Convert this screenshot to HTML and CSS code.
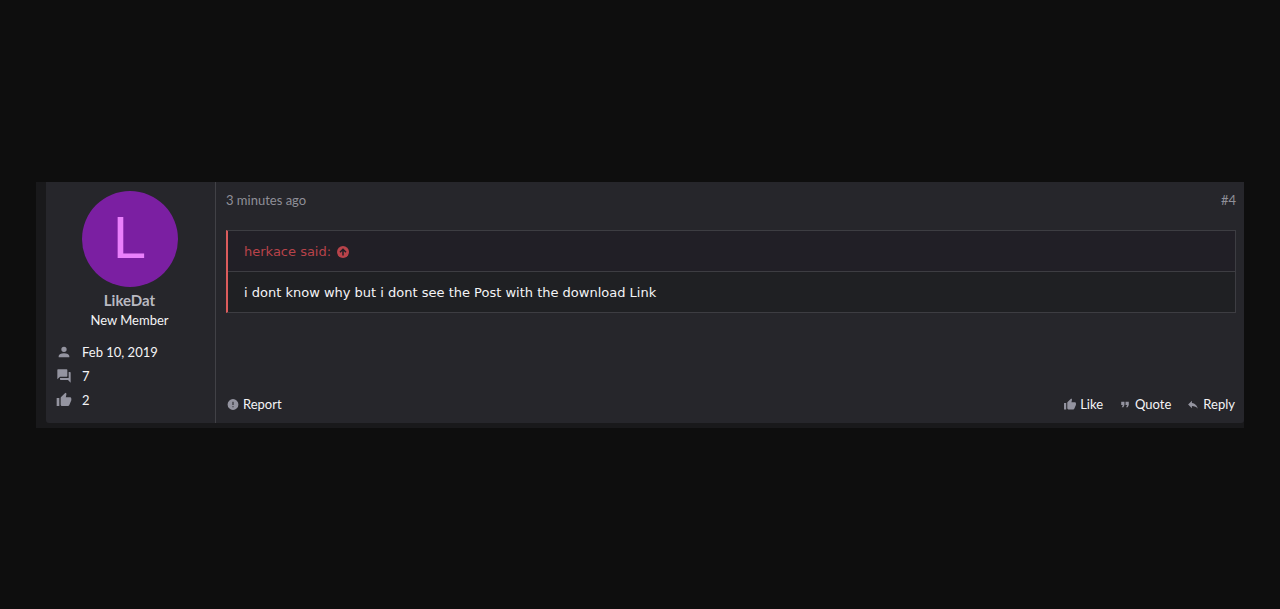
FILE: index.html
```html
<!DOCTYPE html>
<html lang="en">
  <head>
    <meta charset="UTF-8" />
    <meta name="viewport" content="width=device-width, initial-scale=1.0" />
    <title>Thread reply</title>
    <link rel="stylesheet" href="styles.css">
  </head>
  <body>
    <!-- icons shared by the member stats and the action bar -->
    <svg class="sprite" aria-hidden="true">
      <symbol id="icon-account" viewBox="0 0 24 24">
        <path d="M12 4a4 4 0 0 1 4 4 4 4 0 0 1-4 4 4 4 0 0 1-4-4 4 4 0 0 1 4-4m0 10c4.42 0 8 1.79 8 4v2H4v-2c0-2.21 3.58-4 8-4z" />
      </symbol>
      <symbol id="icon-forum" viewBox="0 0 24 24">
        <path d="M17 12V3a1 1 0 0 0-1-1H3a1 1 0 0 0-1 1v14l4-4h10a1 1 0 0 0 1-1m4-6h-2v9H6v2a1 1 0 0 0 1 1h11l4 4V7a1 1 0 0 0-1-1z" />
      </symbol>
      <symbol id="icon-thumb" viewBox="0 0 24 24">
        <path d="M23 10a2 2 0 0 0-2-2h-6.32l.96-4.57c.02-.1.03-.21.03-.32 0-.41-.17-.79-.44-1.06L14.17 1 7.59 7.58C7.22 7.95 7 8.45 7 9v10a2 2 0 0 0 2 2h9c.83 0 1.54-.5 1.84-1.22l3.02-7.05c.09-.23.14-.47.14-.73v-2M1 21h4V9H1v12z" />
      </symbol>
      <symbol id="icon-alert" viewBox="0 0 24 24">
        <path d="M13 13h-2V7h2m0 10h-2v-2h2M12 2A10 10 0 0 0 2 12a10 10 0 0 0 10 10 10 10 0 0 0 10-10A10 10 0 0 0 12 2z" />
      </symbol>
      <symbol id="icon-quote" viewBox="0 0 24 24">
        <path d="M14 17h3l2-4V7h-6v6h3M6 17h3l2-4V7H5v6h3l-2 4z" />
      </symbol>
      <symbol id="icon-reply" viewBox="0 0 24 24">
        <path d="M10 9V5l-7 7 7 7v-4.1c5 0 8.5 1.6 11 5.1-1-5-4-10-11-11z" />
      </symbol>
      <symbol id="icon-up" viewBox="0 0 24 24">
        <circle cx="12" cy="12" r="12" />
        <path class="icon-up-arrow" d="M12 19V7M6 12.500 12 6.500 18 12.500" />
      </symbol>
    </svg>

    <main class="thread">
      <article class="message">
        <aside class="message-user">
          <a class="avatar" href="#">L</a>
          <a class="username" href="#">LikeDat</a>
          <div class="user-title">New Member</div>
          <dl class="user-stats">
            <div class="stat">
              <dt><svg class="stat-icon" role="img" aria-label="Joined"><use href="#icon-account" /></svg></dt>
              <dd>Feb 10, 2019</dd>
            </div>
            <div class="stat">
              <dt><svg class="stat-icon" role="img" aria-label="Messages"><use href="#icon-forum" /></svg></dt>
              <dd>7</dd>
            </div>
            <div class="stat">
              <dt><svg class="stat-icon" role="img" aria-label="Likes"><use href="#icon-thumb" /></svg></dt>
              <dd>2</dd>
            </div>
          </dl>
        </aside>

        <div class="message-main">
          <header class="message-header">
            <a href="#">3 minutes ago</a>
            <a href="#">#4</a>
          </header>

          <blockquote class="quote">
            <a class="quote-title" href="#">herkace said: <svg class="quote-icon" aria-hidden="true"><use href="#icon-up" /></svg></a>
            <div class="quote-content">i dont know why but i dont see the Post with the download Link</div>
          </blockquote>

          <footer class="message-footer">
            <a class="action" href="#"><svg class="action-icon" aria-hidden="true"><use href="#icon-alert" /></svg>Report</a>
            <div class="action-group">
              <a class="action" href="#"><svg class="action-icon" aria-hidden="true"><use href="#icon-thumb" /></svg>Like</a>
              <a class="action" href="#"><svg class="action-icon" aria-hidden="true"><use href="#icon-quote" /></svg>Quote</a>
              <a class="action" href="#"><svg class="action-icon" aria-hidden="true"><use href="#icon-reply" /></svg>Reply</a>
            </div>
          </footer>
        </div>
      </article>
    </main>
  </body>
</html>
```
FILE: styles.css
```css
* {
  box-sizing: border-box;
}
body {
  margin: 0;
  min-height: 100vh;
  padding: 182px 36px 0;
  background-color: #0e0e0e;
  color: #f4f4f6;
  font-family: Lato, sans-serif;
  font-size: 13px;
  line-height: 20px;
}
a {
  color: inherit;
  text-decoration: none;
}
svg {
  fill: currentColor;
}
.sprite {
  display: none;
}
.thread {
  padding: 0 0 5px 10px;
  background-color: #19191b;
}
.message {
  display: flex;
  background-color: #26262b;
  border-radius: 0 0 3px 3px;
}

/* member column */
.message-user {
  display: flex;
  flex-direction: column;
  align-items: center;
  width: 170px;
  padding: 9px 11px 11px 9px;
  border-right: 1px solid #414146;
}
.avatar {
  width: 96px;
  height: 96px;
  margin-bottom: 3px;
  border-radius: 50%;
  background-color: #7b1fa2;
  color: #ea80fc;
  font-family: "Liberation Sans", Arial, sans-serif;
  font-size: 60px;
  line-height: 94px;
  text-align: center;
}
.username {
  color: #b9b9c1;
  font-size: 15px;
  font-weight: bold;
}
.user-stats {
  width: 100%;
  margin: 10px 0 0;
  padding-left: 1px;
}
.stat {
  display: flex;
  align-items: center;
  height: 24px;
}
.stat dt {
  display: flex;
  width: 26px;
}
.stat dd {
  margin: 0;
}
.stat-icon {
  width: 16px;
  height: 16px;
  color: #9494a0;
}

/* post */
.message-main {
  display: flex;
  flex: 1;
  flex-direction: column;
  padding: 8px 8px 9px 10px;
}
.message-header {
  display: flex;
  justify-content: space-between;
  margin-bottom: 20px;
  color: #8f8f98;
}
.quote {
  margin: 0;
  border: 1px solid #3d3d42;
  border-left: 2px solid #dc5c5c;
  background-color: #1f2023;
  font-family: Verdana, "DejaVu Sans", sans-serif;
}
.quote-title {
  display: flex;
  align-items: center;
  gap: 6px;
  padding: 11px 16px 9px;
  border-bottom: 1px solid #3d3d42;
  background-color: #211f26;
  color: #b8434a;
}
.quote-icon {
  width: 12px;
  height: 12px;
}
.icon-up-arrow {
  fill: none;
  stroke: #211f26;
  stroke-width: 3;
}
.quote-content {
  padding: 11px 16px 9px;
}
.message-footer {
  display: flex;
  justify-content: space-between;
  margin-top: auto;
  padding-right: 1px;
}
.action-group {
  display: flex;
  gap: 15px;
}
.action {
  display: flex;
  align-items: center;
  gap: 3px;
}
.action-icon {
  width: 14px;
  height: 13px;
  color: #9494a0;
}
```
